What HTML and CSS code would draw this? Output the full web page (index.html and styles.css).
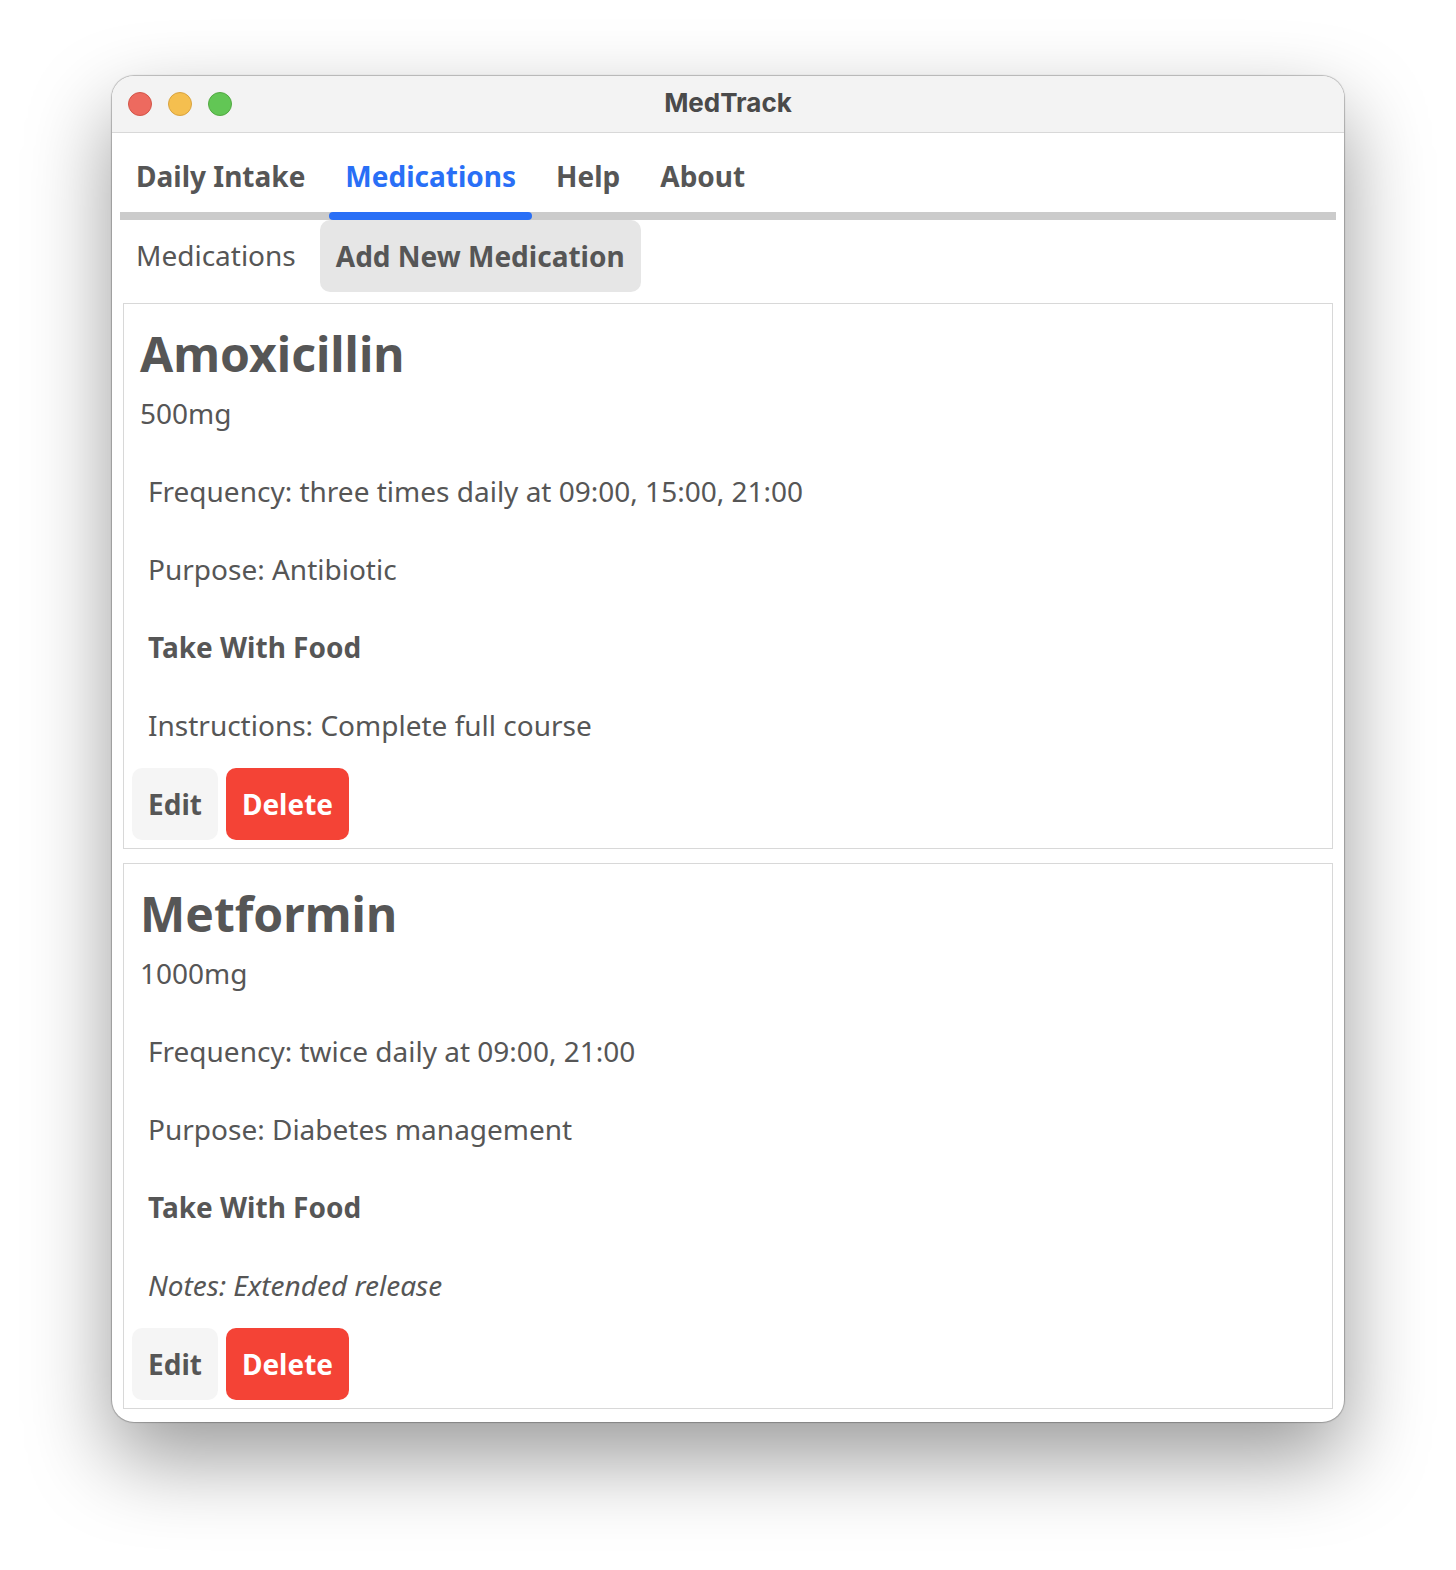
FILE: index.html
```html
<!DOCTYPE html>
<html lang="en">
<head>
  <meta charset="utf-8">
  <meta name="viewport" content="width=device-width, initial-scale=1">
  <title>MedTrack</title>
  <link rel="stylesheet" href="styles.css">
</head>
<body>
  <div class="window">
    <header class="titlebar">
      <div class="controls">
        <button type="button" class="control control-close" aria-label="Close"></button>
        <button type="button" class="control control-minimize" aria-label="Minimize"></button>
        <button type="button" class="control control-zoom" aria-label="Zoom"></button>
      </div>
      <h1 class="title">MedTrack</h1>
    </header>

    <main class="content">
      <div class="tabs" role="tablist">
        <button type="button" class="tab" role="tab" aria-selected="false">Daily Intake</button>
        <button type="button" class="tab" role="tab" aria-selected="true">Medications</button>
        <button type="button" class="tab" role="tab" aria-selected="false">Help</button>
        <button type="button" class="tab" role="tab" aria-selected="false">About</button>
      </div>

      <div class="toolbar">
        <p class="label">Medications</p>
        <button type="button" class="button button-active">Add New Medication</button>
      </div>

      <div class="cards">
        <article class="card">
          <header class="card-header">
            <h2 class="card-title">Amoxicillin</h2>
            <p class="card-subtitle">500mg</p>
          </header>
          <div class="card-body">
            <p class="label">Frequency: three times daily at 09:00, 15:00, 21:00</p>
            <p class="label">Purpose: Antibiotic</p>
            <p class="label label-strong">Take With Food</p>
            <p class="label">Instructions: Complete full course</p>
            <div class="actions">
              <button type="button" class="button">Edit</button>
              <button type="button" class="button button-danger">Delete</button>
            </div>
          </div>
        </article>

        <article class="card">
          <header class="card-header">
            <h2 class="card-title">Metformin</h2>
            <p class="card-subtitle">1000mg</p>
          </header>
          <div class="card-body">
            <p class="label">Frequency: twice daily at 09:00, 21:00</p>
            <p class="label">Purpose: Diabetes management</p>
            <p class="label label-strong">Take With Food</p>
            <p class="label label-note">Notes: Extended release</p>
            <div class="actions">
              <button type="button" class="button">Edit</button>
              <button type="button" class="button button-danger">Delete</button>
            </div>
          </div>
        </article>
      </div>
    </main>
  </div>
</body>
</html>
```
FILE: styles.css
```css
* {
  box-sizing: border-box;
}

body {
  margin: 0;
  padding: 76px 112px 148px;
  background: #fff;
  color: #565656;
  font: 28px/38px "Noto Sans", sans-serif;
}

h1,
h2,
p {
  margin: 0;
}

button {
  border: 0;
  color: inherit;
  font: inherit;
}

.window {
  border-radius: 22px;
  background: #fff;
  box-shadow:
    0 0 1px 1px rgba(0, 0, 0, 0.24),
    0 36px 84px rgba(0, 0, 0, 0.4);
}

/* Title bar */
.titlebar {
  display: grid;
  grid-template-columns: 1fr auto 1fr;
  align-items: center;
  height: 57px;
  padding: 0 16px;
  border-bottom: 1px solid #d8d8d8;
  border-radius: 22px 22px 0 0;
  background: #f3f3f3;
}

.controls {
  display: flex;
  gap: 16px;
}

.control {
  width: 24px;
  height: 24px;
  padding: 0;
  border: 1px solid;
  border-radius: 50%;
}

.control-close {
  border-color: #d35548;
  background: #ed6a5f;
}

.control-minimize {
  border-color: #d9a33f;
  background: #f5bf4f;
}

.control-zoom {
  border-color: #52a942;
  background: #62c655;
}

.title {
  color: #4a4a4a;
  font: 700 26px/54px Inter, sans-serif;
  height: 56px;
}

/* Tabs */
.content {
  padding: 7px 8px 13px;
}

.tabs {
  display: flex;
  gap: 8px;
  border-bottom: 8px solid #cbcbcb;
}

.tab {
  position: relative;
  padding: 16px;
  background: none;
  font-weight: 700;
  line-height: 40px;
}

.tab[aria-selected="true"] {
  color: #296ff6;
}

.tab[aria-selected="true"]::after {
  position: absolute;
  top: 100%;
  left: 0;
  width: 100%;
  height: 8px;
  border-radius: 4px;
  background: #296ff6;
  content: "";
}

/* Labels and buttons */
.toolbar,
.actions {
  display: flex;
  align-items: flex-start;
  gap: 8px;
}

.label {
  padding: 16px;
}

.label-strong {
  font-weight: 700;
}

.label-note {
  font-style: italic;
}

.button {
  padding: 16px;
  border-radius: 10px;
  background: #f5f5f5;
  font-weight: 700;
  line-height: 40px;
}

.button-active {
  background: #e6e6e6;
}

.button-danger {
  background: #f44336;
  color: #fff;
}

/* Medication cards */
.cards {
  display: grid;
  gap: 14px;
  padding: 11px 3px 0;
}

.card {
  border: 1px solid #d8d8d8;
}

.card-header {
  display: grid;
  gap: 6px;
  padding: 16px;
}

.card-title {
  font-size: 48px;
  font-weight: 700;
  line-height: 68px;
}

.card-body {
  display: grid;
  gap: 8px;
  padding: 8px;
}
```
